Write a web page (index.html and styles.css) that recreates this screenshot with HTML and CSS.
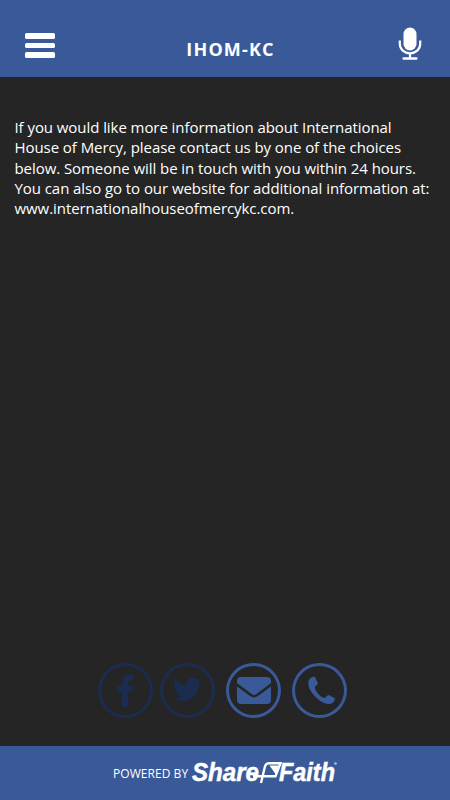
FILE: index.html
```
<!DOCTYPE html>
<html lang="en">
<head>
  <meta charset="UTF-8">
  <meta name="viewport" content="width=device-width, initial-scale=1">
  <title>IHOM-KC</title>
  <link rel="stylesheet" href="styles.css">
</head>
<body>

  <header class="topbar">
    <button class="menu" aria-label="Menu">
      <span></span>
      <span></span>
      <span></span>
    </button>
    <h1>IHOM-KC</h1>
    <button class="mic" aria-label="Record">
      <svg width="24" height="34" viewBox="0 0 24 34">
        <rect x="5.500" y="0.500" width="13" height="23" rx="6.500" fill="#fff"/>
        <path d="M1.800 13.500v3.500a10.200 9.300 0 0 0 20.400 0v-3.500M12 26.500v5" fill="none" stroke="#fff" stroke-width="2.200"/>
        <rect x="4.500" y="30.300" width="15" height="2.500" rx="1" fill="#fff"/>
      </svg>
    </button>
  </header>

  <main class="content">
    <p>
      If you would like more information about International<br>
      House of Mercy, please contact us by one of the choices<br>
      below. Someone will be in touch with you within 24 hours.<br>
      You can also go to our website for additional information at:<br>
      www.internationalhouseofmercykc.com.
    </p>
  </main>

  <nav class="contact">
    <a class="circle off" aria-label="Facebook">
      <svg width="55" height="55" viewBox="0 0 55 55">
        <path d="M35.500 11.500v6h-2.800c-2 0-2.500.8-2.500 2.500v3h5.100l-.8 5.500h-4.300V44H24V28.500h-5V23h5v-4c0-5 2.800-7.500 7.300-7.500z"/>
      </svg>
    </a>
    <a class="circle off" aria-label="Twitter">
      <svg width="55" height="55" viewBox="0 0 24 24">
        <path transform="translate(5.600 5.200) scale(.53)" d="M23.950 4.570a10 10 0 0 1-2.820.77 4.960 4.960 0 0 0 2.160-2.720c-.95.550-2 .95-3.130 1.180a4.920 4.920 0 0 0-8.380 4.480C7.690 8.100 4.070 6.130 1.640 3.160a4.930 4.930 0 0 0 1.520 6.570 4.900 4.900 0 0 1-2.230-.61v.06a4.920 4.920 0 0 0 3.950 4.830 5 5 0 0 1-2.210.08 4.940 4.940 0 0 0 4.600 3.420A9.870 9.870 0 0 1 0 19.540a14 14 0 0 0 7.550 2.210c9.050 0 14-7.500 14-13.980 0-.21 0-.42-.02-.63a9.940 9.940 0 0 0 2.460-2.550z"/>
      </svg>
    </a>
    <a class="circle mail" aria-label="Email">
      <svg width="55" height="55" viewBox="0 0 55 55">
        <path d="M11 18q0-4 4-4h26q4 0 4 4v2L30.500 31q-2.500 1.800-5 0L11 20z"/>
        <path d="M11 23.500l13.500 9.800q3.500 2.200 7 0L45 23.500V37q0 4-4 4H15q-4 0-4-4z"/>
      </svg>
    </a>
    <a class="circle phone" aria-label="Call">
      <svg width="55" height="55" viewBox="0 0 55 55">
        <path d="M18 15.500q2.500-2.400 5-1.500l2.800 6q.3 1-.8 1.900l-2 1.700q-.4 3.300 3.300 7.500t6.800 4l2-2.400q1-1 2.200-.4l4.900 2.400q1.200.8.500 2.200-1.600 3.900-5.800 4.100-6.600 0-13.800-7.500T16.300 20q0-2.900 1.700-4.500z"/>
      </svg>
    </a>
  </nav>

  <footer class="footer">
    <span>POWERED BY</span>
    <svg class="logo" width="155" height="40" viewBox="0 -4 155 40">
      <text x="1" y="24" textLength="67" lengthAdjust="spacingAndGlyphs">Share</text>
      <path d="M62 19.200h22.500L89.500 6.300H78q-3 0-4 3L70 26" fill="none" stroke="#fff" stroke-width="2.400"/>
      <path d="M78.500 8.500h9l-3 8.500z" fill="#fff"/>
      <text x="88" y="24" textLength="56" lengthAdjust="spacingAndGlyphs">Faith</text>
      <circle cx="144.500" cy="6.500" r="1.300" fill="#a9bfe6"/>
    </svg>
  </footer>

</body>
</html>
```
FILE: styles.css
```
* {
  box-sizing: border-box;
}
body {
  margin: 0;
  height: 100vh;
  display: flex;
  flex-direction: column;
  font-family: "Open Sans", sans-serif;
  background: #252525;
  color: #fff;
}
button {
  padding: 0;
  border: none;
  background: none;
}
.topbar {
  height: 77px;
  padding: 27px 28px 0 25px;
  display: flex;
  justify-content: space-between;
  align-items: flex-start;
  background: #3a5998;
}
.topbar h1 {
  margin: 10px 0 0 8px;
  font-size: 18px;
  line-height: 24px;
  letter-spacing: 1.15px;
}
.menu {
  width: 30px;
  margin-top: 6px;
  display: flex;
  flex-direction: column;
  gap: 4px;
}
.menu span {
  height: 5.7px;
  border-radius: 1.5px;
  background: #fff;
}
.mic svg {
  display: block;
}
.content {
  flex: 1;
  padding: 40px 14.5px 0;
}
.content p {
  margin: 0;
  font-size: 15px;
  line-height: 20.3px;
  letter-spacing: -0.065px;
  white-space: nowrap;
}
.contact {
  display: flex;
  padding: 0 0 28px 98.4px;
}
.circle {
  width: 55px;
  height: 55px;
  margin-right: 7px;
  border-radius: 50%;
  box-shadow: inset 0 0 0 3px #3a5998;
  fill: #3a5998;
}
.circle svg {
  display: block;
}
.circle.off {
  box-shadow: inset 0 0 0 3px #1c2c50;
  fill: #1c2c50;
}
.mail {
  margin-left: 4px;
  margin-right: 11px;
}
.footer {
  height: 54px;
  padding-left: 113px;
  display: flex;
  align-items: center;
  background: #3a5998;
}
.footer span {
  width: 78px;
  font-size: 12px;
  letter-spacing: 0.05px;
  white-space: nowrap;
}
.logo {
  overflow: visible;
}
.logo text {
  font: italic bold 26px "Liberation Sans", sans-serif;
  fill: #fff;
  stroke: #fff;
  stroke-width: 0.5px;
}
```
